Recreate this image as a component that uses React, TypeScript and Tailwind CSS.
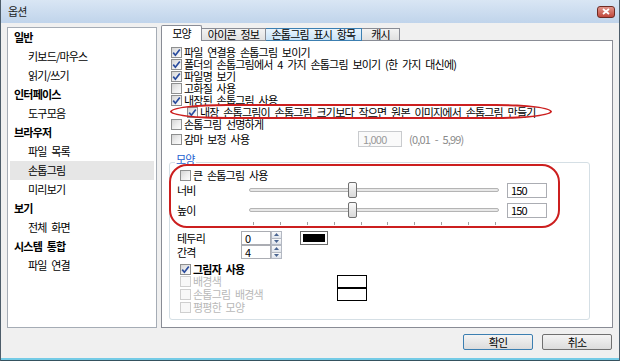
import React from "react";

// list on the left of the dialog
const tree: { t: string; h?: boolean; sel?: boolean }[] = [
  { t: "일반", h: true },
  { t: "키보드/마우스" },
  { t: "읽기/쓰기" },
  { t: "인터페이스", h: true },
  { t: "도구모음" },
  { t: "브라우저", h: true },
  { t: "파일 목록" },
  { t: "손톱그림", sel: true },
  { t: "미리보기" },
  { t: "보기", h: true },
  { t: "전체 화면" },
  { t: "시스템 통합", h: true },
  { t: "파일 연결" },
];

const Box = ({ checked = false, disabled = false }: { checked?: boolean; disabled?: boolean }) => (
  <span
    className={`flex h-[11px] w-[11px] shrink-0 items-center justify-center border ${
      disabled
        ? "border-[#cfcfcf] bg-[#f8f8f8]"
        : "border-[#8e8f8f] bg-gradient-to-br from-[#d4d4d4] via-[#ececec] to-[#fdfdfd]"
    }`}
  >
    {checked && (
      <svg viewBox="0 0 9 9" className="h-[9px] w-[9px]">
        <path d="M1.2 4.6 L3.4 7.2 L7.8 1.4" fill="none" stroke="#2a4c9e" strokeWidth="1.7" />
      </svg>
    )}
  </span>
);

const Opt = ({
  label,
  checked,
  disabled,
  className = "",
}: {
  label: string;
  checked?: boolean;
  disabled?: boolean;
  className?: string;
}) => (
  <div className={`flex h-[12px] items-center gap-[2px] ${className}`}>
    <Box checked={checked} disabled={disabled} />
    <span className={`whitespace-nowrap leading-[11px] ${disabled ? "text-[#b8b8b8]" : "text-black"}`}>{label}</span>
  </div>
);

const Slider = () => (
  <div className="relative h-[16px] w-[250px]">
    <div className="absolute left-0 right-0 top-[6px] h-[4px] rounded-full border border-[#b4b4b4] bg-[#e8e8e8]" />
    <div className="absolute left-[99px] top-0 h-[16px] w-[9px] rounded-[2px] border border-[#707070] bg-gradient-to-b from-[#fafafa] to-[#d8d8d8]" />
  </div>
);

const Spin = () => (
  <div className="flex h-[14px] w-[11px] flex-col">
    <div className="flex flex-1 items-center justify-center border border-[#b3b8c2] bg-gradient-to-b from-[#fafafa] to-[#dfe4ec]">
      <svg viewBox="0 0 5 3" className="h-[3px] w-[5px]">
        <path d="M0 3 L2.5 0 L5 3Z" fill="#4a6591" />
      </svg>
    </div>
    <div className="-mt-px flex flex-1 items-center justify-center border border-[#b3b8c2] bg-gradient-to-b from-[#fafafa] to-[#dfe4ec]">
      <svg viewBox="0 0 5 3" className="h-[3px] w-[5px]">
        <path d="M0 0 L2.5 3 L5 0Z" fill="#4a6591" />
      </svg>
    </div>
  </div>
);

export default function App() {
  return (
    <div
      className={`relative flex h-[361px] w-[620px] flex-col overflow-hidden border-x border-[#4d5d6a] bg-[#f0f0f0] text-[11px] tracking-[-0.8px] [word-spacing:3px] text-black font-['Noto_Sans_CJK_KR','Noto_Sans',sans-serif]`}
    >
      {/* title bar */}
      <div className="flex h-[23px] shrink-0 items-center justify-between bg-gradient-to-b from-[#d9e6f4] to-[#c0d4eb] pl-[7px] pr-[4px]">
        <span className="leading-none text-[#1c1c1c]">옵션</span>
        <div className="flex h-[12px] w-[18px] items-center justify-center rounded-[3px] border border-[#6e2b23] bg-gradient-to-b from-[#e1948b] to-[#c0463b]">
          <svg viewBox="0 0 8 7" className="h-[7px] w-[8px]">
            <path d="M1 1 L7 6 M7 1 L1 6" stroke="white" strokeWidth="1.8" />
          </svg>
        </div>
      </div>

      <div className="flex pt-[2px]">
        {/* left tree */}
        <div className="ml-[6px] mt-[2px] h-[301px] w-[150px] border border-[#a5acb5] bg-white">
          {tree.map((it) => (
            <div
              key={it.t}
              className={`mx-[2px] flex h-[19px] items-center leading-none ${it.h ? "pl-[4px] font-bold" : "pl-[18px]"} ${
                it.sel ? "bg-[#e6e6e6]" : ""
              }`}
            >
              {it.t}
            </div>
          ))}
        </div>

        {/* right side: tabs + panel */}
        <div className="ml-[4px] flex w-[452px] flex-col">
          <div className="relative z-10 flex h-[16px] items-end">
            <div className="flex h-[16px] w-[41px] items-center justify-center rounded-t-[2px] border border-b-0 border-[#898c95] bg-white leading-none">
              모양
            </div>
            <div className="flex h-[13px] w-[64px] items-center justify-center border border-l-0 border-[#898c95] bg-gradient-to-b from-[#f3f3f3] to-[#e1e1e1] leading-none">
              아이콘 정보
            </div>
            <div className="flex h-[13px] w-[96px] items-center justify-center border border-l-0 border-[#3c7fb1] bg-gradient-to-b from-[#e9f4fd] to-[#c7e2f8] leading-none">
              손톱그림 표시 항목
            </div>
            <div className="flex h-[13px] w-[38px] items-center justify-center border border-l-0 border-[#898c95] bg-gradient-to-b from-[#f3f3f3] to-[#e1e1e1] leading-none">
              캐시
            </div>
          </div>

          <div className="-mt-px flex h-[288px] flex-col border border-[#898c95] bg-white pt-[5px]">
            <div className="flex flex-col pl-[9px]">
              <Opt label="파일 연결용 손톱그림 보이기" checked />
              <Opt label="폴더의 손톱그림에서 4 가지 손톱그림 보이기 (한 가지 대신에)" checked />
              <Opt label="파일명 보기" checked />
              <Opt label="고화질 사용" />
              <Opt label="내장된 손톱그림 사용" checked />
              <Opt label="내장 손톱그림이 손톱그림 크기보다 작으면 원본 이미지에서 손톱그림 만들기" checked className="pl-[16px]" />
              <Opt label="손톱그림 선명하게" />
              <div className="flex h-[18px] items-center">
                <Opt label="감마 보정 사용" className="w-[187px]" />
                <div className="flex h-[16px] w-[44px] items-center border border-[#c9cbce] bg-[#fafafa] pl-[4px] leading-none text-[#9a9a9a]">
                  1,000
                </div>
                <span className="ml-[7px] leading-none text-[#8a8a8a]">(0,01 - 5,99)</span>
              </div>
            </div>

            {/* group box */}
            <div className="relative ml-[7px] mt-[14px] flex h-[158px] w-[421px] flex-col rounded-[3px] border border-[#d5dfe5] pl-[7px] pt-[6px]">
              <span className="absolute -top-[9px] left-[5px] bg-white px-[1px] leading-none text-[#1d5fd0]">모양</span>
              <Opt label="큰 손톱그림 사용" className="pl-[3px]" />
              <div className="mt-[1px] flex h-[16px] items-center">
                <span className="w-[72px] leading-none">너비</span>
                <Slider />
                <div className="ml-[8px] flex h-[15px] w-[40px] items-center border border-[#abadb3] bg-white pl-[3px] leading-none">150</div>
              </div>
              <div className="mt-[4px] flex h-[16px] items-center">
                <span className="w-[72px] leading-none">높이</span>
                <Slider />
                <div className="ml-[8px] flex h-[15px] w-[40px] items-center border border-[#abadb3] bg-white pl-[3px] leading-none">150</div>
              </div>
              <div className="ml-[76px] mt-[4px] flex h-[4px] w-[243px] justify-between">
                {[0, 1, 2, 3, 4, 5, 6, 7, 8, 9].map((i) => (
                  <span key={i} className="h-[3px] w-px bg-[#a0a0a0]" />
                ))}
              </div>
              <div className="mt-[5px] flex h-[14px] items-center">
                <span className="w-[64px] leading-none">테두리</span>
                <div className="flex h-[14px] w-[30px] items-center border border-[#abadb3] bg-white pl-[3px] leading-none">0</div>
                <Spin />
                <div className="ml-[18px] flex h-[14px] w-[28px] border border-[#6a6a6a] bg-white p-[2px]">
                  <div className="flex-1 bg-black" />
                </div>
              </div>
              <div className="flex h-[14px] items-center">
                <span className="w-[64px] leading-none">간격</span>
                <div className="flex h-[14px] w-[30px] items-center border border-[#abadb3] bg-white pl-[3px] leading-none">4</div>
                <Spin />
              </div>
              <Opt label="그림자 사용" checked className="mt-[4px] pl-[3px] font-semibold" />
              <div className="flex h-[13px] items-center">
                <Opt label="배경색" disabled className="w-[160px] pl-[3px]" />
                <div className="h-[13px] w-[30px] border border-black bg-white" />
              </div>
              <div className="flex h-[13px] items-center">
                <Opt label="손톱그림 배경색" disabled className="w-[160px] pl-[3px]" />
                <div className="-mt-px h-[13px] w-[30px] border border-black bg-white" />
              </div>
              <Opt label="평평한 모양" disabled className="h-[13px] pl-[3px]" />
            </div>
          </div>
        </div>
      </div>

      {/* buttons */}
      <div className="mt-[6px] flex justify-end gap-[9px] pr-[7px]">
        <button className="flex h-[16px] w-[70px] items-center justify-center rounded-[2px] border border-[#3c7fb1] bg-gradient-to-b from-[#f4f4f4] to-[#dcdcdc] leading-none">
          확인
        </button>
        <button className="flex h-[16px] w-[70px] items-center justify-center rounded-[2px] border border-[#707070] bg-gradient-to-b from-[#f4f4f4] to-[#dcdcdc] leading-none">
          취소
        </button>
      </div>

      <div className="flex-1" />
      <div className="h-[2px] bg-[#74cbe6]" />
      <div className="h-px bg-[#35525f]" />

      {/* red annotations drawn over the dialog */}
      <div className="pointer-events-none absolute left-[169px] top-[104px] h-[15px] w-[382px] rounded-[60px/8px] border-2 border-[#cc1f1f]" />
      <div className="pointer-events-none absolute left-[168px] top-[164px] h-[64px] w-[391px] rounded-[18px] border-2 border-[#cc1f1f]" />
    </div>
  );
}
